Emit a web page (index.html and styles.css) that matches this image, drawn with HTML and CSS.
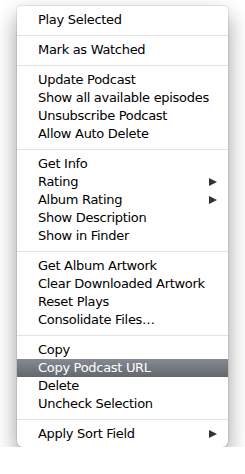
FILE: index.html
```html
<!DOCTYPE html>
<html lang="en">
<head>
    <meta charset="UTF-8">
    <meta name="viewport" content="width=device-width, initial-scale=1.0">
    <title>Context Menu</title>
    <link rel="stylesheet" href="styles.css">
</head>
<body>

    <div class="menu">
        <div class="item">Play Selected</div>
        <div class="sep"></div>

        <div class="item">Mark as Watched</div>
        <div class="sep"></div>

        <div class="item">Update Podcast</div>
        <div class="item">Show all available episodes</div>
        <div class="item">Unsubscribe Podcast</div>
        <div class="item">Allow Auto Delete</div>
        <div class="sep"></div>

        <div class="item">Get Info</div>
        <div class="item sub">Rating</div>
        <div class="item sub">Album Rating</div>
        <div class="item">Show Description</div>
        <div class="item">Show in Finder</div>
        <div class="sep"></div>

        <div class="item">Get Album Artwork</div>
        <div class="item">Clear Downloaded Artwork</div>
        <div class="item">Reset Plays</div>
        <div class="item">Consolidate Files…</div>
        <div class="sep"></div>

        <div class="item">Copy</div>
        <div class="item selected">Copy Podcast URL</div>
        <div class="item">Delete</div>
        <div class="item">Uncheck Selection</div>
        <div class="sep"></div>

        <div class="item sub">Apply Sort Field</div>
    </div>

</body>
</html>
```

FILE: styles.css
```css
body {
    margin: 0;
    padding: 6px 0 0 17px;
    background-color: #ffffff;
    font-family: "DejaVu Sans", "Liberation Sans", sans-serif;
}

.menu {
    width: 211px;
    height: 441px;
    box-sizing: border-box;
    padding: 5px 0 4px;
    background-color: #ffffff;
    border-radius: 4px 4px 6px 6px;
    box-shadow: 0 0 0 1px rgba(0, 0, 0, 0.08), 0 10px 22px rgba(0, 0, 0, 0.4);
}

.item {
    position: relative;
    height: 18px;
    line-height: 18px;
    padding-left: 21px;
    font-size: 13px;
    letter-spacing: -0.3px;
    color: #000;
    white-space: nowrap;
}

.item.sub::after {
    content: "";
    position: absolute;
    right: 11px;
    top: 5px;
    border-left: 8px solid #333;
    border-top: 4.5px solid transparent;
    border-bottom: 4.5px solid transparent;
}

.item.selected {
    color: #ffffff;
    background: linear-gradient(#858a92, #63686f);
}

.sep {
    height: 1px;
    margin: 6px 0 5px;
    background-color: #e3e3e3;
}
```
